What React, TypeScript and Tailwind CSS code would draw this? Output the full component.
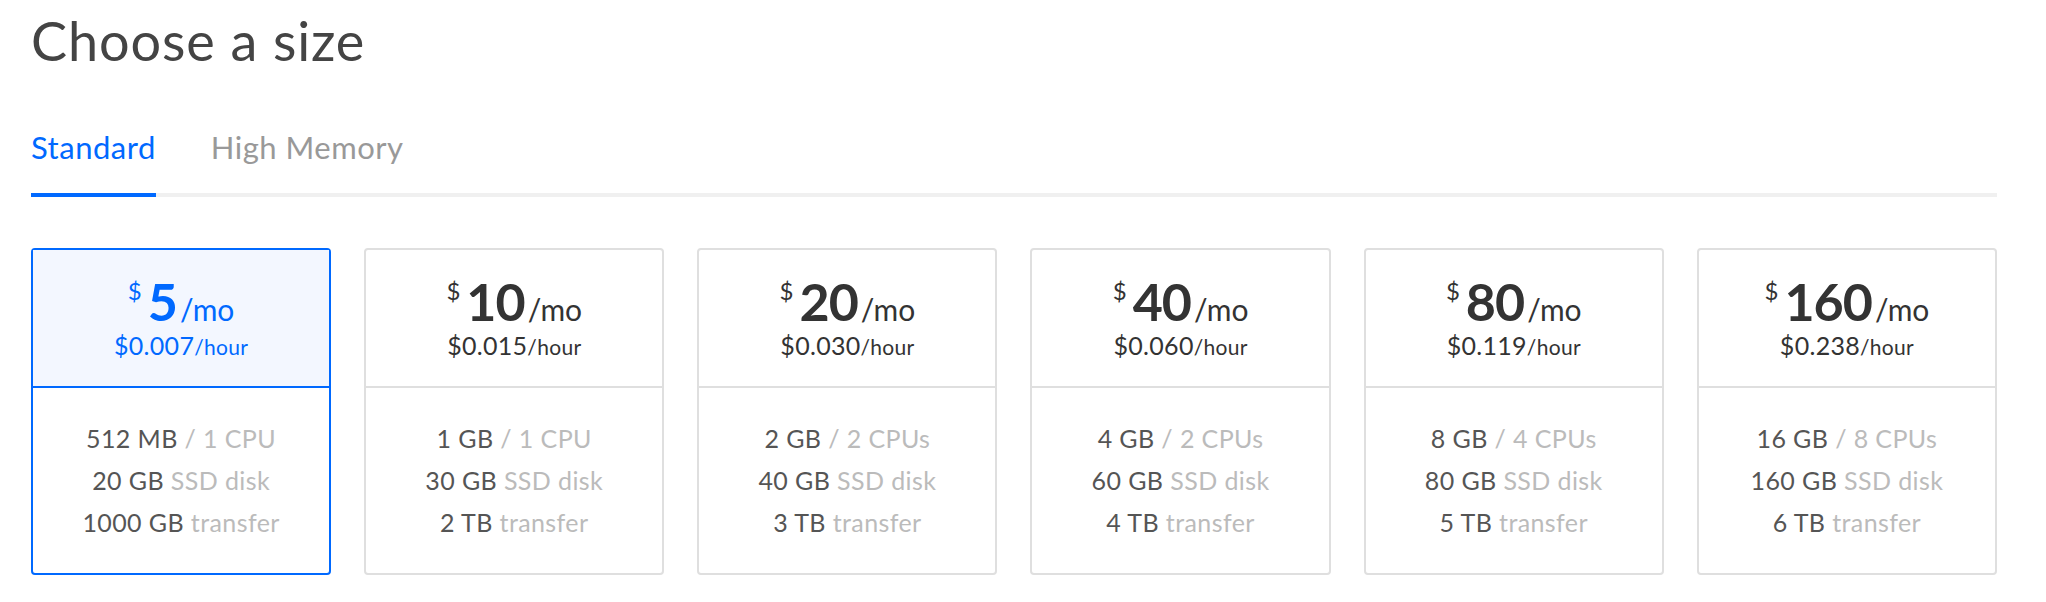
const plans = [
  { mo: '5', hour: '0.007', ram: '512 MB', cpu: '1 CPU', disk: '20 GB', transfer: '1000 GB' },
  { mo: '10', hour: '0.015', ram: '1 GB', cpu: '1 CPU', disk: '30 GB', transfer: '2 TB' },
  { mo: '20', hour: '0.030', ram: '2 GB', cpu: '2 CPUs', disk: '40 GB', transfer: '3 TB' },
  { mo: '40', hour: '0.060', ram: '4 GB', cpu: '2 CPUs', disk: '60 GB', transfer: '4 TB' },
  { mo: '80', hour: '0.119', ram: '8 GB', cpu: '4 CPUs', disk: '80 GB', transfer: '5 TB' },
  { mo: '160', hour: '0.238', ram: '16 GB', cpu: '8 CPUs', disk: '160 GB', transfer: '6 TB' },
];

export default function App() {
  const selected = 0;

  return (
    <div className="min-h-screen bg-white pl-[31px] pr-[49px] font-['Lato',sans-serif] text-[#444]">
      <h1 className="pt-[9px] text-[54px] leading-[64px] font-normal tracking-[0.9px]">Choose a size</h1>

      <div className="mt-[54px] flex border-b-4 border-[#f0f0f0]">
        <button className="-mb-[4px] border-b-4 border-[#0069ff] pb-[26px] text-[31px] leading-[40px] tracking-[0.5px] text-[#0069ff]">
          Standard
        </button>
        <button className="ml-[55px] pb-[26px] text-[31px] leading-[40px] tracking-[0.5px] text-[#999]">
          High Memory
        </button>
      </div>

      <div className="mt-[51px] grid grid-cols-6 gap-[33px]">
        {plans.map((p, i) => {
          const active = i === selected;
          return (
            <div
              key={p.mo}
              className={`flex h-[327px] flex-col rounded-[4px] border-2 ${
                active ? 'border-[#0069ff]' : 'border-[#dfdfdf]'
              }`}
            >
              <div
                className={`flex h-[138px] flex-col items-center justify-center border-b-2 pb-[4px] ${
                  active ? 'border-[#0069ff] bg-[#f3f7ff] text-[#0069ff]' : 'border-[#dfdfdf] text-[#333]'
                }`}
              >
                <div className="flex items-baseline leading-none">
                  <span className="mr-[6px] self-start pt-[4px] text-[24px]">$</span>
                  <span className="text-[52px] font-bold tracking-[-1px]">{p.mo}</span>
                  <span className="ml-[3px] text-[30px]">/mo</span>
                </div>
                <div className="mt-[6px] leading-none tracking-[0.3px]">
                  <span className="text-[25px]">${p.hour}</span>
                  <span className="text-[21px]">/hour</span>
                </div>
              </div>
              <div className="flex flex-1 flex-col items-center justify-center pb-[2px] text-[25px] leading-[42px] tracking-[0.4px]">
                <div>
                  <span className="text-[#555]">{p.ram}</span>
                  <span className="text-[#bbb]"> / {p.cpu}</span>
                </div>
                <div>
                  <span className="text-[#555]">{p.disk}</span>
                  <span className="text-[#bbb]"> SSD disk</span>
                </div>
                <div>
                  <span className="text-[#555]">{p.transfer}</span>
                  <span className="text-[#bbb]"> transfer</span>
                </div>
              </div>
            </div>
          );
        })}
      </div>
    </div>
  );
}
